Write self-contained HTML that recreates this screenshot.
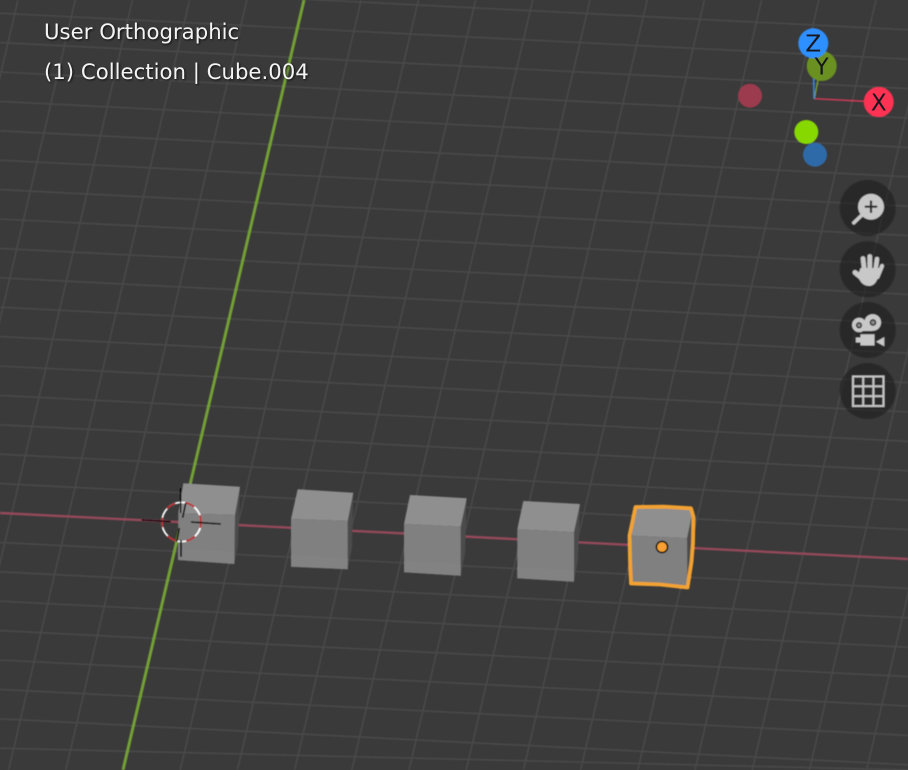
<!DOCTYPE html>
<html>
<head>
<meta charset="utf-8">
<style>
html,body{margin:0;padding:0;width:908px;height:770px;overflow:hidden;background:#3a3a3a}
#w{position:relative;width:908px;height:770px;overflow:hidden}
svg{display:block;position:absolute;left:0;top:0;overflow:hidden}
text{font-family:"DejaVu Sans","Liberation Sans",sans-serif}
</style>
</head>
<body>
<div id="w">
<svg width="908" height="770" viewBox="0 0 908 770" xmlns="http://www.w3.org/2000/svg">
<defs>
<filter id="b" x="-5%" y="-20%" width="110%" height="140%"><feGaussianBlur stdDeviation="1"/></filter>
<filter id="s" x="-2%" y="-2%" width="104%" height="104%"><feGaussianBlur stdDeviation="0.45"/></filter>
<filter id="t" x="-5%" y="-20%" width="110%" height="140%"><feGaussianBlur stdDeviation="0.3"/></filter>
</defs>
<rect width="908" height="770" fill="#3a3a3a"/>
<g filter="url(#s)">
<!-- grid -->
<path fill="none" stroke="#484848" stroke-width="1.6" d="M0 -16.2l908 46M0 13.2l908 46M0 42.6l908 46M0 72l908 46M0 101.4l908 46M0 130.8l908 46M0 160.2l908 46M0 189.6l908 46M0 219l908 46M0 248.4l908 46M0 277.8l908 46M0 307.2l908 46M0 336.6l908 46M0 366l908 46M0 395.4l908 46M0 424.8l908 46M0 454.2l908 46M0 483.6l908 46M0 542.4l908 46M0 571.8l908 46M0 601.2l908 46M0 630.6l908 46M0 660l908 46M0 689.4l908 46M0 718.8l908 46M0 748.2l908 21.8"/>
<path fill="none" stroke="#484848" stroke-width="1.6" d="M18 0l-181 770M75.2 0l-181 770M132.4 0l-181 770M189.6 0l-181 770M246.8 0l-181 770M361.2 0l-181 770M418.4 0l-181 770M475.6 0l-181 770M532.8 0l-181 770M590 0l-181 770M647.2 0l-181 770M704.4 0l-181 770M761.6 0l-181 770M818.8 0l-181 770M876 0l-181 770M933.2 0l-181 770M990.4 0l-181 770M1047.6 0l-181 770M1104.8 0l-181 770"/>
<!-- axes -->
<path d="M0 513L908 559" stroke="#94485a" stroke-width="2.4" fill="none"/>
<path d="M304 0L123 770" stroke="#73a035" stroke-width="3" fill="none"/>

<!-- cube 1 -->
<path d="M240 486.7L235 515L234.3 564L238 545Z" fill="#4b4b4b"/>
<path d="M183.3 483.3L240 486.7L235 515L178.3 513.3Z" fill="#8f8f8f"/>
<path d="M178.3 513.3L235 515L234.3 564L178 560Z" fill="#808080"/>
<path d="M178 548L234.5 552L234.3 564L178 560Z" fill="#828282"/>
<!-- cube 2 -->
<path d="M353.3 492.7L347.7 521L347.7 569.3L352 548Z" fill="#4b4b4b"/>
<path d="M297.7 489.3L353.3 492.7L347.7 521L291 519Z" fill="#8f8f8f"/>
<path d="M291 519L347.7 521L347.7 569.3L291 566.7Z" fill="#808080"/>
<path d="M291 555L347.7 558L347.7 569.3L291 566.7Z" fill="#828282"/>
<!-- cube 3 -->
<path d="M466.7 498.3L460.7 526.7L460.7 575.7L465 554Z" fill="#4b4b4b"/>
<path d="M410 495L466.7 498.3L460.7 526.7L404 524Z" fill="#8f8f8f"/>
<path d="M404 524L460.7 526.7L460.7 575.7L404 572.3Z" fill="#808080"/>
<path d="M404 561L460.7 564L460.7 575.7L404 572.3Z" fill="#828282"/>
<!-- cube 4 -->
<path d="M580 504L574 532.3L574 581.7L578 560Z" fill="#4b4b4b"/>
<path d="M523.3 501L580 504L574 532.3L517.3 529.3Z" fill="#8f8f8f"/>
<path d="M517.3 529.3L574 532.3L574 581.7L517.3 578.3Z" fill="#808080"/>
<path d="M517.3 567L574 570L574 581.7L517.3 578.3Z" fill="#828282"/>
<!-- cube 5 selected -->
<path d="M693 509L687 538L687 586L691 565Z" fill="#4b4b4b"/>
<path d="M636 507.5L693 509.5L687 538.3L631.5 535.7Z" fill="#8f8f8f"/>
<path d="M631.5 535.7L687 538.3L687.5 587L631 583Z" fill="#808080"/>
<path d="M635.5 507L664 506.7L691 508.3L693.5 517L693 543L691.5 562L687.5 587.5L660 584.5L631 583.5L630 560L629.5 535.5Z" fill="none" stroke="#f2a233" stroke-width="3.8" stroke-linejoin="round"/>
<circle cx="662" cy="547" r="5.6" fill="#f8a030" stroke="#111" stroke-width="1.6"/>

<!-- 3D cursor -->
<circle cx="181.5" cy="522" r="19.6" fill="none" stroke="#ffffff" stroke-width="1.8"/>
<circle cx="181.5" cy="522" r="19.6" fill="none" stroke="#b5262c" stroke-width="1.8" stroke-dasharray="10 10" stroke-dashoffset="4"/>
<path d="M141.7 520L170.7 521.7M191 522L220.7 524M180.7 488.3L180.7 513M185.7 503L182.7 517.7M179.3 528L176.7 541.7M181 540L181 556.7" stroke="#000" stroke-width="1.6" fill="none"/>

<!-- gizmo -->
<circle cx="750" cy="95.7" r="12" fill="#9c3a4e"/>
<circle cx="815" cy="154.7" r="12" fill="#2f6aa8"/>
<circle cx="806.3" cy="132" r="12" fill="#86d800"/>
<path d="M814.3 98.7L878 102" stroke="#d43a56" stroke-width="1.4" fill="none"/>
<path d="M814.3 98.7L820 70" stroke="#7aa030" stroke-width="1.4" fill="none"/>
<path d="M814 98.7L813.3 50" stroke="#3a84d8" stroke-width="1.6" fill="none"/>
<circle cx="821.7" cy="66" r="15" fill="#6a9020"/>
<circle cx="813.3" cy="43.3" r="15" fill="#2f8fff"/>
<circle cx="878.7" cy="102" r="15" fill="#ff3352"/>

<!-- buttons -->
<g fill="#1f1f1f" fill-opacity=".62">
<circle cx="867.7" cy="208" r="28"/>
<circle cx="867.7" cy="269.3" r="28"/>
<circle cx="867.7" cy="330" r="28"/>
<circle cx="867.7" cy="391" r="28"/>
</g>
<!-- zoom icon -->
<circle cx="871" cy="206.7" r="13" fill="#c8c8c8"/>
<path d="M862.5 214.5L853.8 222.8" stroke="#c8c8c8" stroke-width="3.6" stroke-linecap="round" fill="none"/>
<path d="M871 200.5V212.9M864.8 206.7H877.2" stroke="#2a2a2a" stroke-width="2.2" fill="none"/>
<!-- hand icon -->
<g stroke="#c8c8c8" stroke-linecap="round" fill="none">
<path d="M863 258.5L864.8 274" stroke-width="4.8"/>
<path d="M869.8 256.5V274" stroke-width="4.8"/>
<path d="M877 259L875 274" stroke-width="4.6"/>
<path d="M882 266L877.5 277" stroke-width="4.2"/>
<path d="M855 272.5L863 279" stroke-width="5"/>
</g>
<path d="M860.5 268H879L880 274L876 282Q873 286.2 869 286Q863.5 285.8 860.5 281.5L857.5 276Z" fill="#c8c8c8"/>
<!-- camera icon -->
<circle cx="859.2" cy="325" r="7.2" fill="#c8c8c8"/>
<circle cx="872.7" cy="322.5" r="8.4" fill="#c8c8c8"/>
<path d="M860 325H872V331H860Z" fill="#c8c8c8"/>
<circle cx="859" cy="325.3" r="2.4" fill="#8a8a8a" stroke="#2e2e2e" stroke-width="1.5"/>
<circle cx="873" cy="322.5" r="2.6" fill="#8a8a8a" stroke="#2e2e2e" stroke-width="1.5"/>
<path d="M860.5 334.2H874.5V345.5H860.5ZM855.8 337.5H860.5V342.5H855.8Z" fill="#c8c8c8"/>
<path d="M884.3 337V346.4L876 341.7Z" fill="#c8c8c8"/>
<!-- grid icon -->
<path d="M853 376.5H883.5V406H853ZM863.2 376.5V406M873.4 376.5V406M853 386.3H883.5M853 396.2H883.5" fill="none" stroke="#c4c4c4" stroke-width="2.1"/>
</g>

<!-- text -->
<g font-size="21.25" fill="#000" opacity=".75" filter="url(#b)">
<text x="45" y="40">User Orthographic</text>
<text x="45" y="80">(1) Collection | Cube.004</text>
</g>
<g font-size="21.25" fill="#f4f4f4" filter="url(#t)">
<text x="44" y="39">User Orthographic</text>
<text x="44" y="79">(1) Collection | Cube.004</text>
</g>
<g font-size="23" fill="#14181c" text-anchor="middle" filter="url(#t)">
<text x="821.7" y="74.5">Y</text>
<text x="813.3" y="51.5">Z</text>
<text x="878.7" y="110.5">X</text>
</g>
</svg>
</div>
</body>
</html>
